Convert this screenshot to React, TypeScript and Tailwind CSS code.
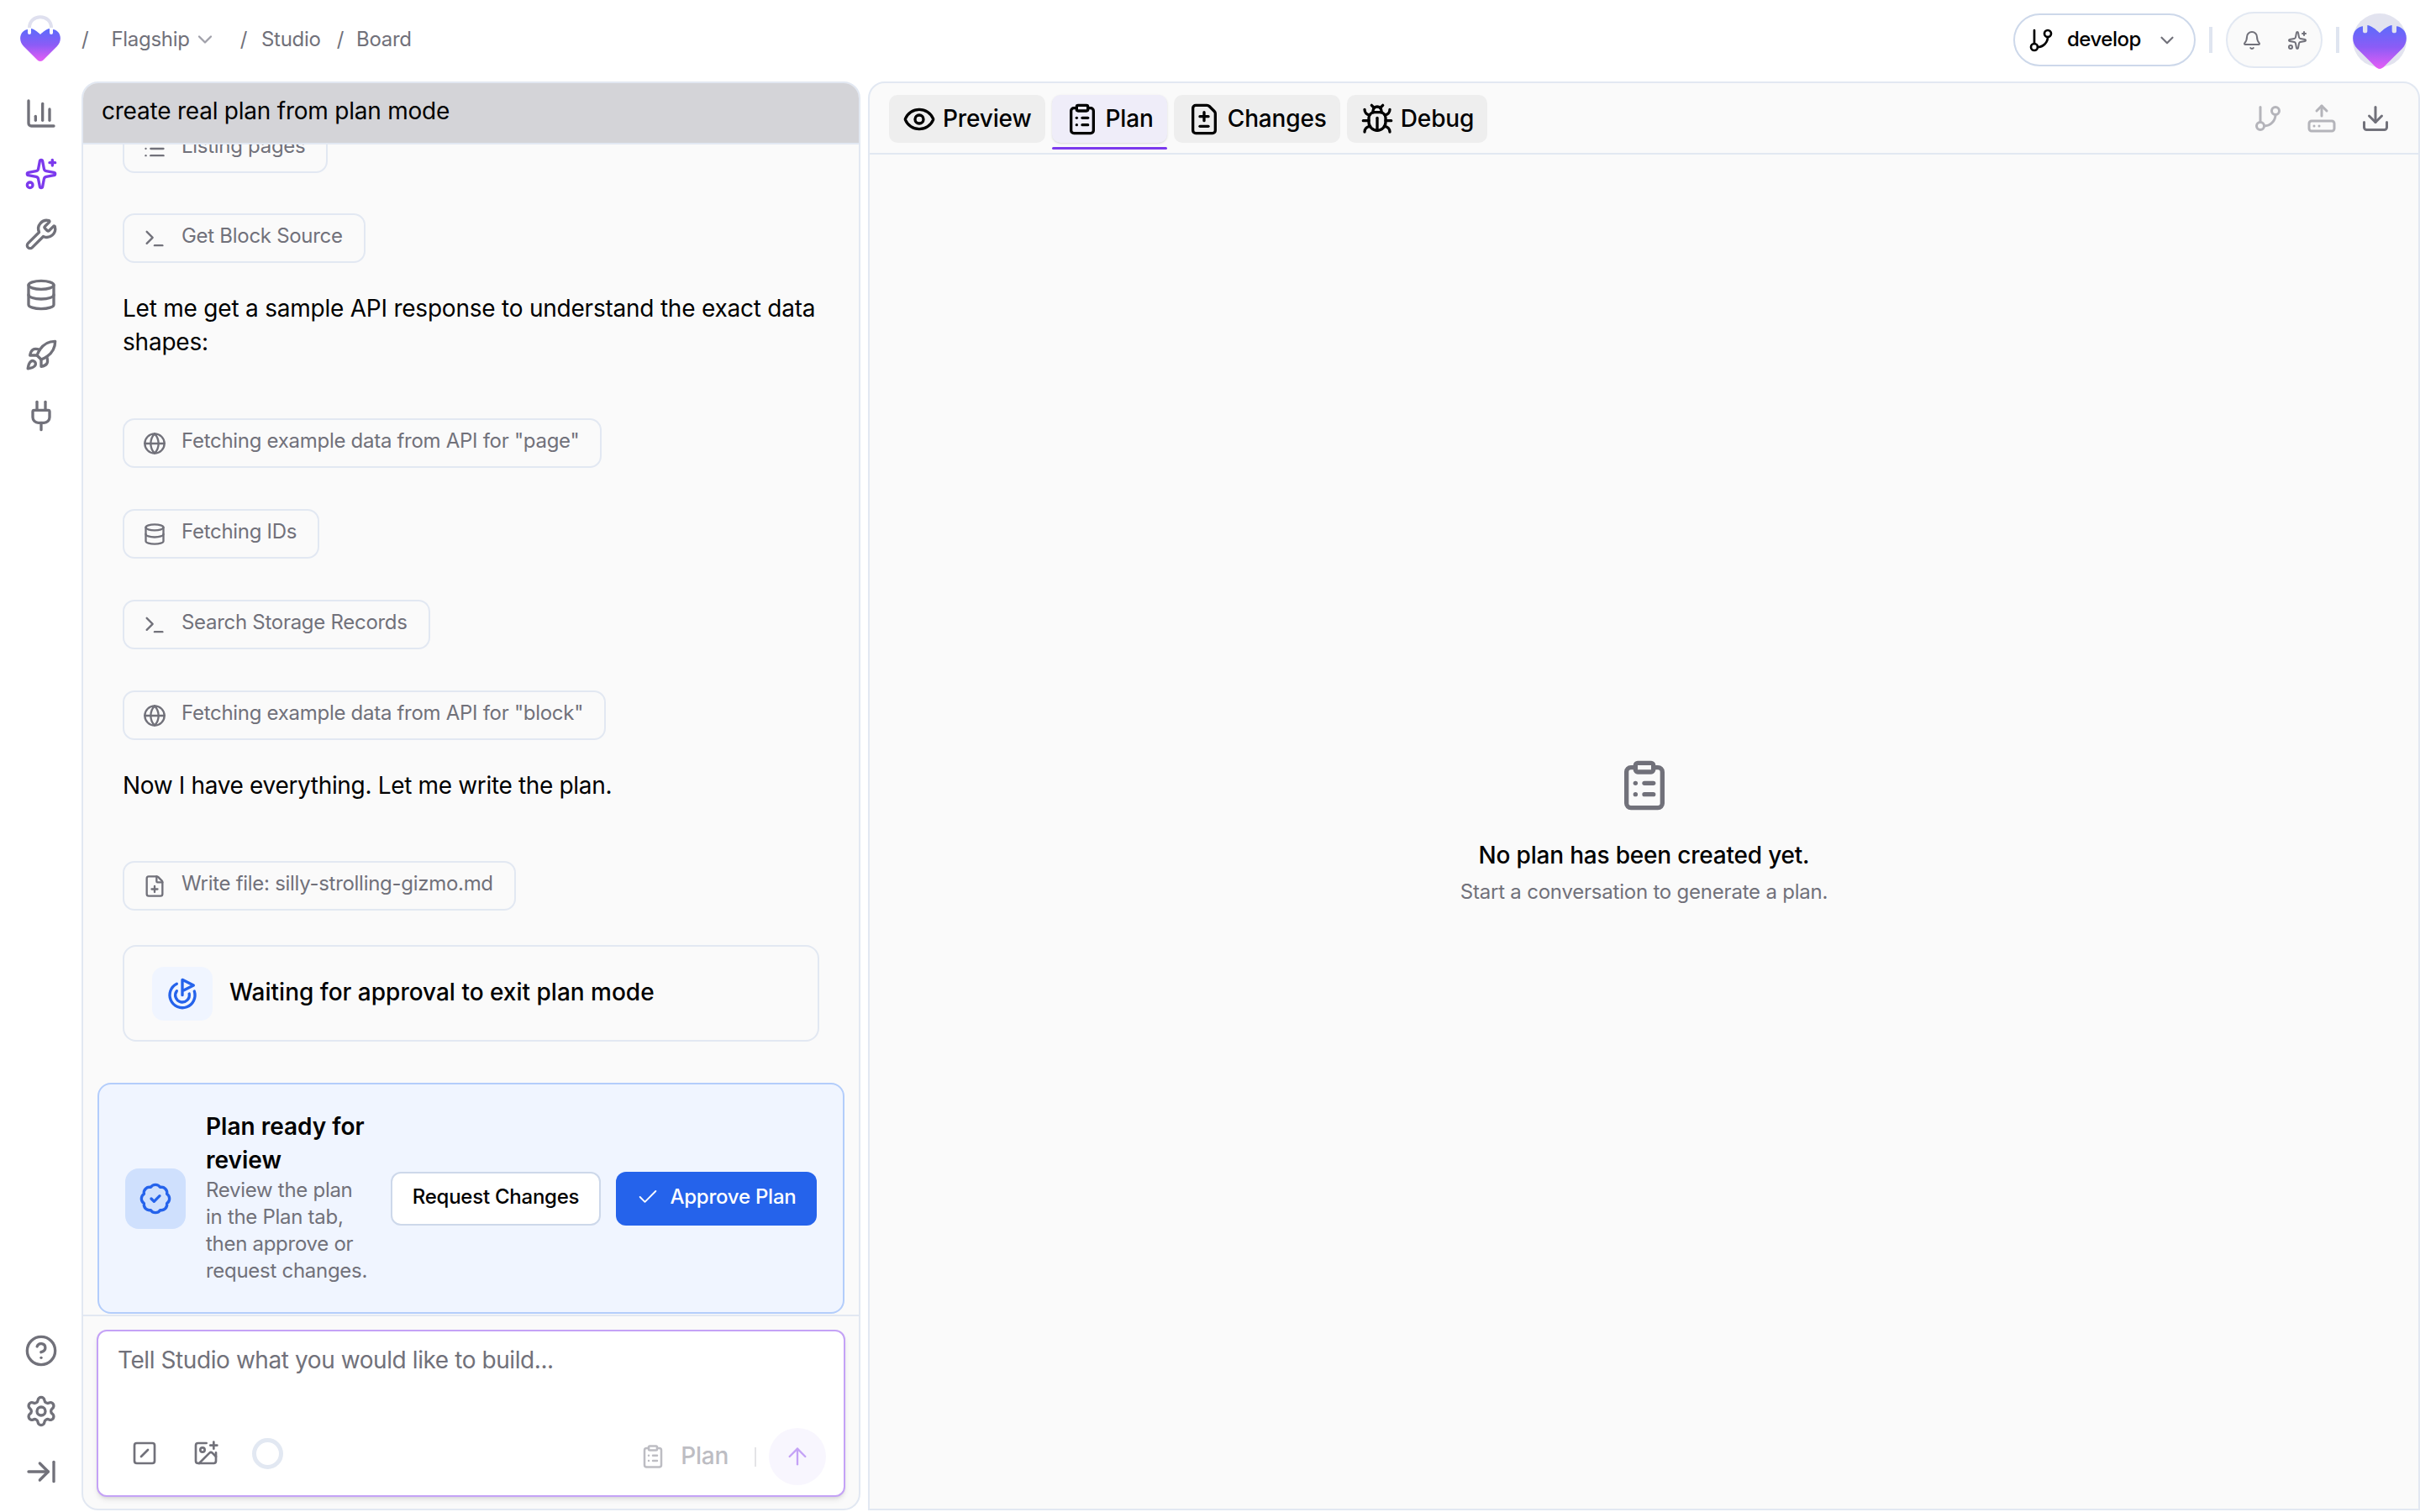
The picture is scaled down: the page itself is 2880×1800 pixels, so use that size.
import {
  ArrowRightToLine,
  ArrowUp,
  BadgeCheck,
  Bell,
  Bug,
  ChartColumn,
  Check,
  ChevronDown,
  CircleHelp,
  ClipboardList,
  Database,
  Download,
  Eye,
  FileDiff,
  FilePlus,
  GitBranch,
  Globe,
  Goal,
  HardDriveUpload,
  ImagePlus,
  List,
  Plug,
  Rocket,
  Settings,
  Sparkles,
  SquareSlash,
  Terminal,
  Wrench,
} from 'lucide-react';
import type { ReactNode } from 'react';

function Heart({ id, className }: { id: string; className: string }) {
  return (
    <svg viewBox="0 0 48 48" className={className}>
      <defs>
        <linearGradient id={id} x1="0" y1="0" x2="0" y2="1">
          <stop offset="0" stopColor="#5b6cfb" />
          <stop offset="0.5" stopColor="#8b5cf6" />
          <stop offset="1" stopColor="#e65df5" />
        </linearGradient>
      </defs>
      <path
        fill={`url(#${id})`}
        d="M24 48c-1.500 0-3-1-4-2L4 30c-5-5-5-13-1-17 2-2 4.500-3 6-3v4a2 2 0 0 0 4 0V9c3 0 8 4 11 7 3-3 8-7 11-7v5a2 2 0 0 0 4 0v-4c2 0 4 1 6 3 4 4 4 12-1 17L28 46c-1 1-2.500 2-4 2z"
      />
    </svg>
  );
}

function Chip({ icon, children }: { icon: ReactNode; children: ReactNode }) {
  return (
    <div className="flex h-[59px] w-fit items-center gap-[18px] rounded-[14px] border-2 border-[#e2e8f2] pr-[25px] pl-[22px] text-[24px] tracking-[-0.012em] text-[#71717a]">
      {icon}
      <span className="pb-[5px]">{children}</span>
    </div>
  );
}

function Tab({ icon, label, active }: { icon: ReactNode; label: string; active?: boolean }) {
  return (
    <div
      className={`relative flex h-[57px] items-center gap-[8px] rounded-[10px] px-[16px] text-[28px] font-medium tracking-[-0.005em] text-black ${
        active ? 'bg-[#efedf9] shadow-sm' : 'bg-[#eeeeee]'
      }`}
    >
      {icon}
      <span className="pb-[2px]">{label}</span>
      {active && <div className="absolute right-0 bottom-[-8px] left-0 h-[3px] rounded-full bg-[#7c3aed]" />}
    </div>
  );
}

export default function App() {
  const chipIcon = 'size-[28px] shrink-0';
  const navIcon = 'size-[40px] text-[#71717a]';

  return (
    <div className="flex h-screen w-full flex-col overflow-hidden bg-white font-[Inter,sans-serif] text-black">
      {/* Top bar */}
      <header className="flex h-[97px] shrink-0 items-center justify-between pr-[16px] pb-[2px] pl-[24px]">
        <div className="flex items-center text-[24px] tracking-[-0.012em] text-[#71717a]">
          <div className="relative mt-[2px] h-[48px] w-[48px]">
            <svg viewBox="0 0 48 20" className="absolute top-[-12px] left-0 w-[48px]">
              <path d="M11 20C11 3 37 3 37 20" fill="none" stroke="#dfe0ef" strokeWidth="4" />
            </svg>
            <Heart id="logo-heart" className="absolute top-0 left-0 size-[48px]" />
          </div>
          <div className="flex items-center pb-[2px]">
            <span className="ml-[25px]">/</span>
            <span className="ml-[27px]">Flagship</span>
            <ChevronDown className="ml-[4px] size-[28px] text-[#a1a1aa]" />
            <span className="ml-[28px]">/</span>
            <span className="ml-[17px]">Studio</span>
            <span className="ml-[19px]">/</span>
            <span className="ml-[15px]">Board</span>
          </div>
        </div>

        <div className="flex items-center">
          <div className="flex h-[63px] w-[217px] items-center rounded-full border-2 border-[#cdd8ea] bg-white pl-[15px] text-[24px] font-medium tracking-[-0.02em]">
            <GitBranch className="size-[32px]" />
            <span className="ml-[15px] pb-[2px]">develop</span>
            <ChevronDown className="ml-[18px] size-[26px] text-[#71717a]" />
          </div>
          <div className="mx-[16px] h-[31px] w-[4px] bg-[#dfe5f0]" />
          <div className="flex h-[67px] w-[115px] items-center justify-center gap-[30px] rounded-full border-2 border-[#e2e8f2] bg-[#fafafa] text-[#71717a]">
            <Bell className="size-[24px]" />
            <Sparkles className="size-[24px]" />
          </div>
          <div className="mx-[16px] h-[31px] w-[4px] bg-[#dfe5f0]" />
          <div className="flex size-[64px] items-center justify-center rounded-full bg-[#e2e3ef]">
            <Heart id="avatar-heart" className="mt-[4px] size-[64px]" />
          </div>
        </div>
      </header>

      <div className="flex min-h-0 flex-1 pb-[2px]">
        {/* Sidebar */}
        <nav className="flex w-[97px] shrink-0 flex-col items-center justify-between pt-[18px] pb-[26px]">
          <div className="flex flex-col items-center gap-[32px]">
            <ChartColumn className={navIcon} />
            <Sparkles className="size-[40px] text-[#7c3aed]" />
            <Wrench className={navIcon} />
            <Database className={navIcon} />
            <Rocket className={navIcon} />
            <Plug className={navIcon} />
          </div>
          <div className="flex flex-col items-center gap-[32px]">
            <CircleHelp className={navIcon} />
            <Settings className={navIcon} />
            <ArrowRightToLine className={navIcon} />
          </div>
        </nav>

        {/* Chat panel */}
        <section className="flex w-[927px] shrink-0 flex-col overflow-hidden rounded-[20px] border-2 border-[#e2e8f2] bg-[#fafafa]">
          <div className="flex h-[71px] shrink-0 items-center bg-[#d4d4d8] pb-[6px] pl-[22px] text-[28px] tracking-[-0.008em]">
            create real plan from plan mode
          </div>

          <div className="flex min-h-0 flex-1 flex-col justify-end overflow-hidden border-t-2 border-[#e2e8f2] px-[47px]">
            <div className="shrink-0">
              <Chip icon={<List className={chipIcon} />}>Listing pages</Chip>
            </div>
            <div className="mt-[48px] shrink-0">
              <Chip icon={<Terminal className={chipIcon} />}>Get Block Source</Chip>
            </div>
            <p className="mt-[34px] shrink-0 text-[28px] leading-[40px] tracking-[-0.008em]">
              Let me get a sample API response to understand the exact data shapes:
            </p>
            <div className="mt-[71px] shrink-0">
              <Chip icon={<Globe className={chipIcon} />}>Fetching example data from API for "page"</Chip>
            </div>
            <div className="mt-[49px] shrink-0">
              <Chip icon={<Database className={chipIcon} />}>Fetching IDs</Chip>
            </div>
            <div className="mt-[49px] shrink-0">
              <Chip icon={<Terminal className={chipIcon} />}>Search Storage Records</Chip>
            </div>
            <div className="mt-[49px] shrink-0">
              <Chip icon={<Globe className={chipIcon} />}>Fetching example data from API for "block"</Chip>
            </div>
            <p className="mt-[34px] shrink-0 text-[28px] leading-[40px] tracking-[-0.012em]">
              Now I have everything. Let me write the plan.
            </p>
            <div className="mt-[70px] shrink-0">
              <Chip icon={<FilePlus className={chipIcon} />}>Write file: silly-strolling-gizmo.md</Chip>
            </div>
            <div className="mt-[41px] flex h-[115px] shrink-0 items-center gap-[20px] rounded-[16px] border-2 border-[#e2e8f2] pl-[33px]">
              <div className="flex h-[64px] w-[72px] items-center justify-center rounded-[14px] bg-[#f0f5ff]">
                <Goal className="size-[40px] text-[#2563eb]" />
              </div>
              <span className="pb-[3px] text-[28px] font-medium">Waiting for approval to exit plan mode</span>
            </div>

            <div className="-mx-[30px] mt-[49px] mb-[1px] flex h-[275px] shrink-0 items-center gap-[24px] rounded-[16px] border-2 border-[#b3cdfb] bg-[#f0f5ff] pr-[31px] pl-[31px]">
              <div className="flex size-[72px] shrink-0 items-center justify-center rounded-[16px] bg-[#cfe0fd]">
                <BadgeCheck className="size-[40px] text-[#2563eb]" />
              </div>
              <div className="min-w-0 flex-1 pb-[3px]">
                <div className="text-[28px] leading-[40px] font-semibold">Plan ready for review</div>
                <div className="text-[24px] leading-[32px] tracking-[-0.012em] text-[#71717a]">
                  Review the plan in the Plan tab, then approve or request changes.
                </div>
              </div>
              <div className="flex shrink-0 items-center gap-[18px]">
                <button className="flex h-[64px] w-[250px] items-center justify-center rounded-[12px] border-2 border-[#cdd8ea] bg-white pb-[3px] text-[24px] font-medium tracking-[-0.01em]">
                  Request Changes
                </button>
                <button className="flex h-[64px] w-[239px] items-center justify-center gap-[12px] rounded-[12px] bg-[#2563eb] pb-[3px] text-[24px] font-medium tracking-[-0.01em] text-white">
                  <Check className="size-[28px]" strokeWidth={1.6} />
                  Approve Plan
                </button>
              </div>
            </div>
          </div>

          {/* Input */}
          <div className="h-[231px] shrink-0 border-t-2 border-[#e2e8f2] px-[16px] pt-[16px]">
            <div className="flex h-[199px] flex-col rounded-[12px] border-2 border-[#c4a2f6] bg-white pr-[21px] pb-[12px] pl-[23px] shadow-md">
              <textarea
                placeholder="Tell Studio what you would like to build..."
                className="h-[80px] w-full resize-none pt-[14px] text-[28px] leading-[40px] tracking-[-0.015em] outline-none placeholder:text-[#71717a]"
              />
              <div className="mt-auto flex items-center">
                <div className="mb-[8px] flex items-center">
                  <SquareSlash className="ml-[16px] size-[32px] text-[#71717a]" />
                  <ImagePlus className="ml-[41px] size-[32px] text-[#71717a]" />
                  <div className="ml-[39px] size-[37px] rounded-full border-[5px] border-[#e2e8f2]" />
                </div>
                <ClipboardList className="ml-auto size-[30px] text-[#bdbdc3]" />
                <span className="ml-[18px] pb-[2px] text-[28px] font-medium tracking-[-0.01em] text-[#bdbdc3]">Plan</span>
                <div className="mr-[15px] ml-[31px] h-[23px] w-[2px] bg-[#e4e4e7]" />
                <div className="flex size-[68px] items-center justify-center rounded-full bg-[#f8f6fe]">
                  <ArrowUp className="size-[32px] text-[#c4a2f6]" strokeWidth={1.75} />
                </div>
              </div>
            </div>
          </div>
        </section>

        {/* Right panel */}
        <section className="ml-[9px] flex min-w-0 flex-1 flex-col overflow-hidden rounded-tl-[20px] rounded-tr-[20px] border-2 border-[#e2e8f2] bg-[#fafafa]">
          <div className="flex h-[85px] shrink-0 items-start justify-between border-b-2 border-[#e2e8f2] pt-[14px] pr-[33px] pl-[23px]">
            <div className="flex gap-[8px]">
              <Tab icon={<Eye className="size-[40px]" />} label="Preview" />
              <Tab icon={<ClipboardList className="size-[40px]" />} label="Plan" active />
              <Tab icon={<FileDiff className="size-[40px]" />} label="Changes" />
              <Tab icon={<Bug className="size-[40px]" />} label="Debug" />
            </div>
            <div className="flex items-center gap-[28px] pt-[10px]">
              <GitBranch className="size-[36px] text-[#b4b4ba]" />
              <HardDriveUpload className="size-[36px] text-[#b4b4ba]" />
              <Download className="size-[36px] text-[#71717a]" />
            </div>
          </div>
          <div className="flex min-h-0 flex-1 flex-col items-center justify-center">
            <ClipboardList className="size-[64px] text-[#71717a]" />
            <div className="mt-[31px] text-[28px] leading-[40px] font-medium tracking-[-0.007em]">No plan has been created yet.</div>
            <div className="mt-[8px] text-[24px] leading-[32px] tracking-[-0.009em] text-[#71717a]">
              Start a conversation to generate a plan.
            </div>
          </div>
        </section>
      </div>
    </div>
  );
}
